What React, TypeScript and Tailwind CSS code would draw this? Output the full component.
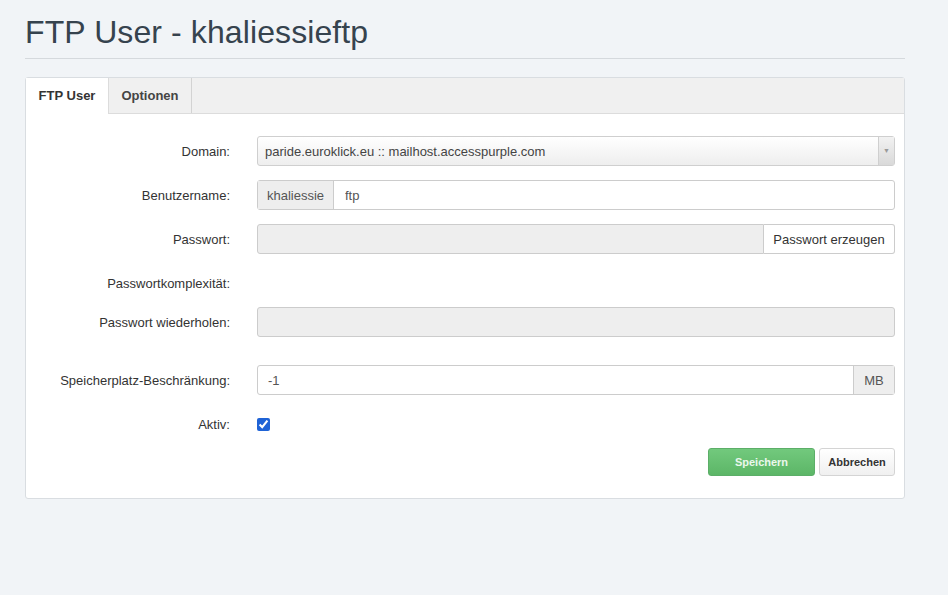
import React from "react";

const labelCls =
  "w-[231px] shrink-0 pr-[27px] text-right text-[13px] text-[#333]";

const Row = ({
  label,
  className,
  children,
}: {
  label: string;
  className?: string;
  children?: React.ReactNode;
}) => (
  <div className={"flex items-center " + (className ?? "")}>
    <label className={labelCls + " pt-px"}>{label}</label>
    <div className="flex-1 pr-[9px]">{children}</div>
  </div>
);

export default function App() {
  return (
    <div
      className="min-h-[595px] w-full bg-[#f1f4f7] pt-[13px]"
      style={{ fontFamily: '"Liberation Sans", Arial, sans-serif' }}
    >
      <div className="ml-[25px] w-[880px]">
        <h1 className="text-[32px] leading-[38px] tracking-[0.1px] text-[#36434e]">
          FTP User - khaliessieftp
        </h1>
        <div className="mt-[7px] border-b border-[#d5d9dd]" />

        <div className="mt-[18px] rounded-[3px] border border-[#d9dde1] bg-white">
          <div className="flex h-[36px] border-b border-[#dcdcdc] bg-[#f0f0f0]">
            <div className="-mb-px flex w-[83px] items-center justify-center border-r border-[#dcdcdc] bg-white text-[13px] font-bold text-[#333]">
              FTP User
            </div>
            <div className="flex w-[83px] items-center justify-center border-r border-[#d3d3d3] text-[13px] font-bold text-[#444]">
              Optionen
            </div>
          </div>

          <div className="pt-[22px] pb-[22px]">
            <Row label="Domain:">
              <div className="flex h-[30px] items-center rounded-[3px] border border-[#cfcfcf] bg-gradient-to-b from-white to-[#eeeeee]">
                <span className="flex-1 pl-[7px] pt-px text-[13px] text-[#444]">
                  paride.euroklick.eu :: mailhost.accesspurple.com
                </span>
                <span className="flex h-full w-[16px] items-center justify-center border-l border-[#cfcfcf] bg-gradient-to-b from-[#f2f2f2] to-[#d9d9d9] text-[7px] text-[#999]">
                  ▼
                </span>
              </div>
            </Row>

            <Row label="Benutzername:" className="mt-[14px]">
              <div className="flex h-[30px] rounded-[3px] border border-[#cccccc]">
                <span className="flex w-[76px] items-center justify-center border-r border-[#cccccc] bg-[#eeeeee] pt-px text-[13px] text-[#555]">
                  khaliessie
                </span>
                <input
                  defaultValue="ftp"
                  className="flex-1 rounded-r-[3px] pl-[11px] pt-px text-[13px] text-[#555] outline-none"
                />
              </div>
            </Row>

            <Row label="Passwort:" className="mt-[14px]">
              <div className="flex h-[30px]">
                <div className="flex-1 rounded-l-[3px] border border-[#cccccc] bg-[#eeeeee]" />
                <button className="w-[131px] rounded-r-[3px] border border-l-0 border-[#cccccc] bg-white pt-px text-[13px] text-[#333]">
                  Passwort erzeugen
                </button>
              </div>
            </Row>

            <Row label="Passwortkomplexität:" className="mt-[19px] h-[20px]" />

            <Row label="Passwort wiederholen:" className="mt-[14px]">
              <div className="h-[30px] rounded-[3px] border border-[#cccccc] bg-[#eeeeee]" />
            </Row>

            <Row label="Speicherplatz-Beschränkung:" className="mt-[28px]">
              <div className="flex h-[30px] rounded-[3px] border border-[#cccccc]">
                <input
                  defaultValue="-1"
                  className="flex-1 rounded-l-[3px] pl-[10px] pt-px text-[13px] text-[#555] outline-none"
                />
                <span className="flex w-[41px] items-center justify-center border-l border-[#cccccc] bg-[#eeeeee] pt-px text-[13px] text-[#555]">
                  MB
                </span>
              </div>
            </Row>

            <Row label="Aktiv:" className="mt-[19px] h-[20px]">
              <input
                type="checkbox"
                defaultChecked
                className="m-0 block h-[13px] w-[13px] accent-[#1f63d6]"
              />
            </Row>

            <div className="mt-[14px] flex justify-end gap-[4px] pr-[9px]">
              <button className="h-[28px] w-[107px] rounded-[3px] border border-[#5cae68] bg-gradient-to-b from-[#72c97d] to-[#5cb667] text-[11px] font-bold text-[#eaf7ec]">
                Speichern
              </button>
              <button className="h-[28px] w-[76px] rounded-[3px] border border-[#d4d4d4] bg-gradient-to-b from-white to-[#f0f0f0] text-[11px] font-bold text-[#333]">
                Abbrechen
              </button>
            </div>
          </div>
        </div>
      </div>
    </div>
  );
}
